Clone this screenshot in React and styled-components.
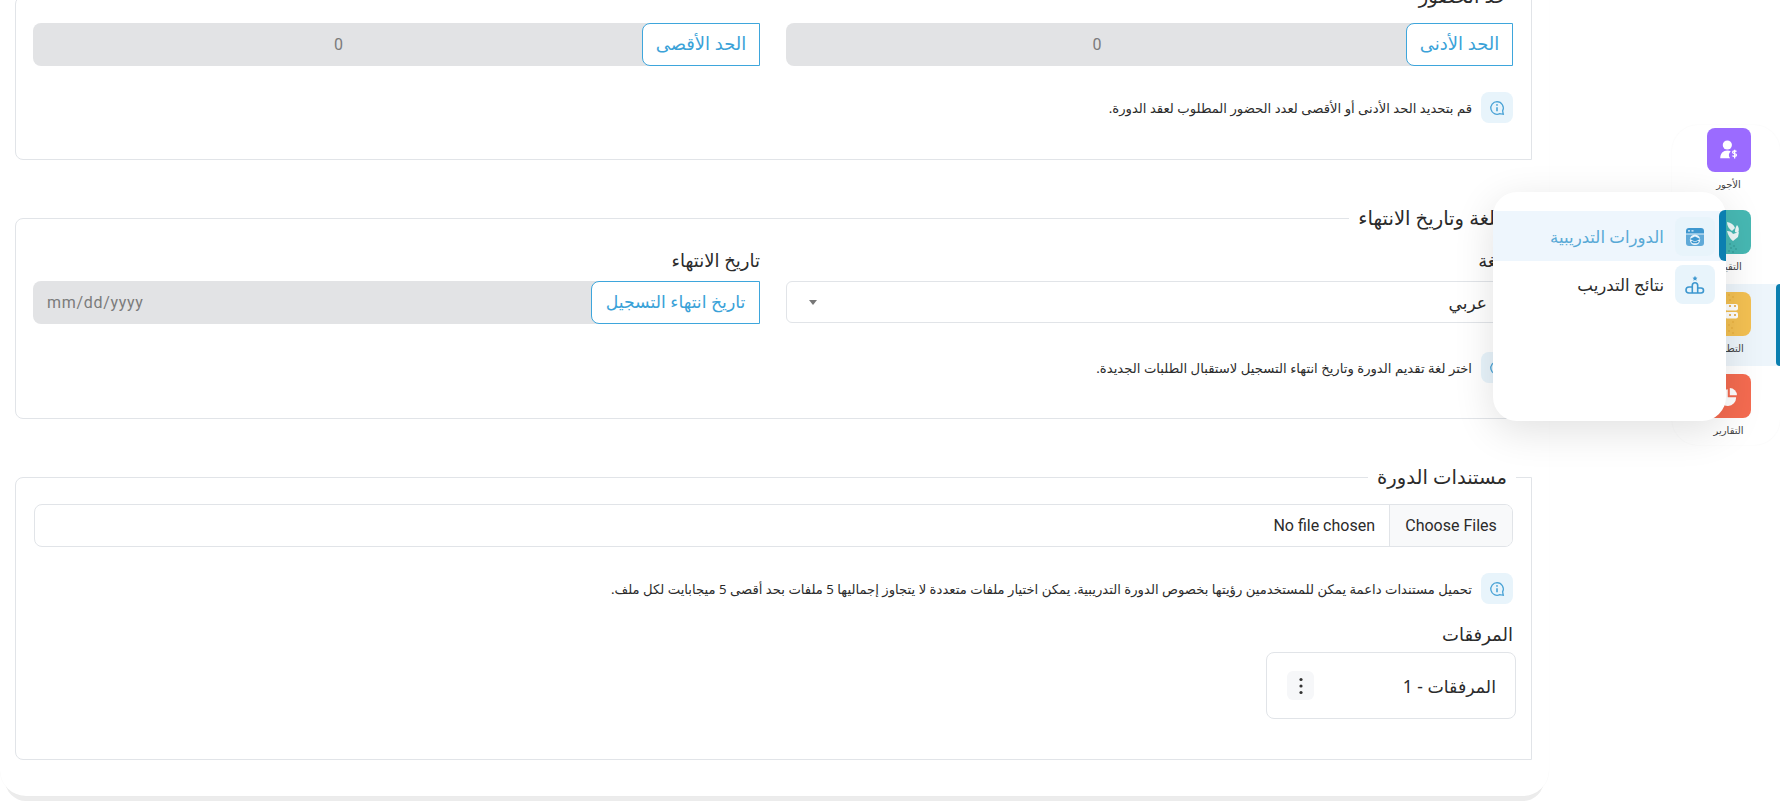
import React from "react"
import styled, { createGlobalStyle } from "styled-components"

const arabic = `"Noto Sans", "DejaVu Sans", sans-serif`
const latin = `Roboto, "DejaVu Sans", sans-serif`
const borderColor = "#e1e4e8"

const GlobalStyle = createGlobalStyle`
  html, body {
    margin: 0;
    padding: 0;
    background: #fff;
    overflow: hidden;
  }
  * {
    box-sizing: border-box;
  }
`

const Page = styled.div`
  direction: ltr;
  display: flex;
  align-items: flex-start;
  width: 1780px;
  height: 801px;
  overflow: hidden;
  font-family: ${arabic};
  color: #2b2b2b;
`

const Card = styled.main`
  direction: rtl;
  flex: none;
  width: 1549px;
  height: 834px;
  margin-top: -38px;
  padding: 20px 17px 0 15px;
  background: #fff;
  border-radius: 26px;
  box-shadow: 0 0 1px rgba(0, 0, 0, 0.05), 0 10px 0 -5px #ececec;
`

const Section = styled.fieldset`
  margin: 0 0 44px;
  padding: ${p => p.$top}px 18px ${p => p.$bottom}px 17px;
  min-width: 0;
  border: 1px solid ${borderColor};
  border-radius: 8px 0 0 8px;
`

const Legend = styled.legend`
  margin-right: -3px;
  padding: 0 9px;
  font-size: 19.6px;
  line-height: 28px;
  white-space: nowrap;
`

const Columns = styled.div`
  display: grid;
  grid-template-columns: 727px 727px;
  column-gap: 26px;
`

const FieldLabel = styled.div`
  height: 24px;
  margin-bottom: 9px;
  font-size: 18px;
  line-height: 24px;
  white-space: nowrap;
`

const InputGroup = styled.div`
  display: flex;
  height: 43px;
`

const Addon = styled.div`
  position: relative;
  z-index: 1;
  flex: none;
  width: ${p => p.$width}px;
  border: 1px solid #3ea6dc;
  border-top-left-radius: 8px;
  border-bottom-left-radius: 8px;
  background: #fff;
  color: #3aa2d8;
  font-size: ${p => p.$size}px;
  line-height: 39px;
  text-align: center;
  white-space: nowrap;
`

const ReadOnly = styled.div`
  flex: 1;
  margin-right: -8px;
  padding: ${p => (p.$date ? "0 14px" : "0 20px 0 14px")};
  border-radius: 8px 0 0 8px;
  background: #e2e3e5;
  color: #7b7b7b;
  font-family: ${latin};
  font-size: 16px;
  letter-spacing: ${p => (p.$date ? "0.7px" : "0")};
  line-height: 43px;
  text-align: ${p => (p.$date ? "left" : "center")};
`

const SelectBox = styled.div`
  display: flex;
  align-items: center;
  justify-content: space-between;
  height: 42px;
  margin-top: 1px;
  padding: 0 25px 0 22px;
  border: 1px solid ${borderColor};
  border-radius: 6px;
  font-size: 17px;
`

const Caret = styled.span`
  width: 0;
  height: 0;
  border-left: 4px solid transparent;
  border-right: 4px solid transparent;
  border-top: 5px solid #777;
`

const Hint = styled.div`
  display: flex;
  align-items: center;
  gap: 9px;
  margin-top: ${p => p.$gap}px;
  font-size: 13.2px;
  white-space: nowrap;
`

const HintIcon = styled.span`
  flex: none;
  display: flex;
  align-items: center;
  justify-content: center;
  width: 32px;
  height: 31px;
  border-radius: 8px;
  background: #e8f4fb;
  color: #4aa3d6;
`

const FileRow = styled.div`
  display: flex;
  height: 43px;
  margin-left: 1px;
  border: 1px solid ${borderColor};
  border-radius: 8px;
  overflow: hidden;
  font-family: ${latin};
  font-size: 16px;
  line-height: 41px;
`

const FileButton = styled.div`
  flex: none;
  width: 123px;
  border-left: 1px solid ${borderColor};
  background: #f8f9fa;
  text-align: center;
`

const FileName = styled.div`
  padding-right: 14px;
`

const AttachLabel = styled.div`
  margin-top: 18px;
  font-size: 18px;
  line-height: 24px;
`

const AttachCard = styled.div`
  display: flex;
  align-items: center;
  justify-content: space-between;
  width: 250px;
  height: 67px;
  margin: 6px -3px 0 0;
  padding: 0 19px 0 20px;
  border: 1px solid ${borderColor};
  border-radius: 8px;
  font-size: 17.4px;
`

const DotsButton = styled.span`
  display: flex;
  align-items: center;
  justify-content: center;
  width: 27px;
  height: 29px;
  border-radius: 6px;
  background: #f6f7f9;
`

const Aside = styled.aside`
  position: relative;
  direction: rtl;
  flex: none;
  width: 108px;
  height: 320px;
  margin: 125px 0 0 auto;
  border-radius: 26px;
  background: #fff;
  box-shadow: 0 0 2px rgba(0, 0, 0, 0.04);
`

const SideList = styled.div`
  margin-top: -5px;
`

const SideItem = styled.div`
  position: relative;
  display: flex;
  flex-direction: column;
  align-items: center;
  height: 82px;
  padding: 8px 0 0 5px;
  background: ${p => (p.$active ? "#edf5fb" : "transparent")};
  &::after {
    content: "";
    display: ${p => (p.$active ? "block" : "none")};
    position: absolute;
    top: 0;
    right: 0;
    bottom: 0;
    width: 4px;
    border-radius: 6px 0 0 6px;
    background: #0b7fb0;
  }
`

const SideIcon = styled.span`
  display: flex;
  align-items: center;
  justify-content: center;
  width: 44px;
  height: 44px;
  border-radius: 8px;
  background: ${p => p.$color};
  color: #fff;
`

const SideLabel = styled.span`
  margin-top: 4px;
  color: #444;
  font-size: 10px;
  line-height: 16px;
`

const Popup = styled.div`
  position: absolute;
  z-index: 5;
  top: 67px;
  left: -179px;
  width: 233px;
  height: 229px;
  padding-top: 19px;
  border-radius: 24px;
  background: #fff;
  box-shadow: 0 10px 40px rgba(0, 0, 0, 0.12);
`

const PopupItem = styled.div`
  position: relative;
  display: flex;
  align-items: center;
  gap: 11px;
  padding: ${p => (p.$active ? "6px 11px 5px" : "4px 11px")};
  background: ${p => (p.$active ? "#eef6fd" : "transparent")};
  color: ${p => (p.$active ? "#58a9d6" : "#2b2b2b")};
  font-size: 16.6px;
  &::after {
    content: "";
    display: ${p => (p.$active ? "block" : "none")};
    position: absolute;
    top: -1px;
    right: 0;
    bottom: 0;
    width: 7px;
    border-radius: 6px 0 0 6px;
    background: #0b7fb0;
  }
`

const PopupIcon = styled.span`
  flex: none;
  display: flex;
  align-items: center;
  justify-content: center;
  width: 40px;
  height: 39px;
  border-radius: 8px;
  background: #e8f4fb;
  color: #3d97cf;
`

function InfoIcon() {
  return (
    <svg width="16" height="16" viewBox="0 0 16 16" fill="none" stroke="currentColor" strokeWidth="1.3">
      <path d="M8 1.7a6.3 6.3 0 1 0 2.8 12l3.5.6-.7-3.4A6.3 6.3 0 0 0 8 1.7Z" />
      <path d="M8 7.2v4" strokeWidth="1.6" />
      <circle cx="8" cy="4.9" r=".9" fill="currentColor" stroke="none" />
    </svg>
  )
}

function WageIcon() {
  return (
    <svg width="20" height="20" viewBox="0 0 24 24" fill="#fff">
      <circle cx="10" cy="6" r="5.500" />
      <path d="M1.500 22c0-6 3.500-9.500 8.500-9.500 1.700 0 3 .3 4.100 1a6.500 6.500 0 0 0-.8 8.500H1.500Z" />
      <path d="M21 13.800c-.8-1-4.700-1.300-4.700.9 0 2.200 4.700 1 4.700 3.300 0 2.200-4 1.900-4.900.8M18.800 11.800v10.400" fill="none" stroke="#fff" strokeWidth="1.500" />
    </svg>
  )
}

function AssessIcon() {
  return (
    <svg width="44" height="44" viewBox="0 0 44 44" fill="#fff">
      <path d="M20 12c4 .5 7 2.500 8 6l-3 3c-3-2-5-5-5-9Z" opacity=".9" />
      <path d="M30 15c2 2 2.500 5 1 8l-3-1c0-2 .5-5 2-7Z" opacity=".9" />
      <path d="M20 21c3 0 5 1 6 3l6-2-1 5-5 4c-3-2-5-6-6-10Z" opacity=".9" />
      <g fill="#2d8f8a">
        <circle cx="23" cy="34" r=".7" /><circle cx="27" cy="36" r=".7" /><circle cx="24" cy="38" r=".7" />
        <circle cx="29" cy="39" r=".7" /><circle cx="22" cy="41" r=".7" /><circle cx="26" cy="42" r=".7" />
      </g>
    </svg>
  )
}

function OrgIcon() {
  return (
    <svg width="44" height="44" viewBox="0 0 44 44">
      <g fill="#fff">
        <rect x="18" y="12" width="13" height="6.500" rx="2" />
        <rect x="18" y="20" width="13" height="6.500" rx="2" />
      </g>
      <g fill="#e0a032">
        <circle cx="23" cy="14" r="1" /><circle cx="28" cy="14" r="1" /><circle cx="23" cy="23" r="1" /><circle cx="28" cy="23" r="1" />
        <circle cx="22" cy="3" r=".7" /><circle cx="26" cy="5" r=".7" /><circle cx="23" cy="8" r=".7" />
        <circle cx="26" cy="30" r=".7" /><circle cx="22" cy="33" r=".7" /><circle cx="25" cy="36" r=".7" />
        <circle cx="22" cy="39" r=".7" /><circle cx="26" cy="41" r=".7" />
      </g>
    </svg>
  )
}

function ReportsIcon() {
  return (
    <svg width="20" height="20" viewBox="0 0 24 24" fill="#fff">
      <path d="M10.500 4a10 10 0 1 0 10 9.500H10.500V4Z" />
      <path d="M13 2.500v8.500h8.500A8.500 8.500 0 0 0 13 2.500Z" />
    </svg>
  )
}

function CoursesIcon() {
  return (
    <svg width="20" height="20" viewBox="0 0 20 20">
      <path d="M1 4a3 3 0 0 1 3-3h12a3 3 0 0 1 3 3v2.500H1V4Z" fill="currentColor" />
      <path d="M3 3.800h2M6.500 3.800h2" stroke="#e8f4fb" strokeWidth="1.200" />
      <path d="M1 7.500h18V16a3 3 0 0 1-3 3H4a3 3 0 0 1-3-3V7.500Z" fill="currentColor" opacity=".8" />
      <circle cx="10" cy="12.800" r="5.200" fill="#e8f4fb" />
      <path d="M10 9.500l5.200 2.500L10 14.500 4.800 12 10 9.500Z" fill="currentColor" />
      <path d="M6.800 14c.5 2.200 6 2.200 6.400 0" fill="none" stroke="currentColor" strokeWidth="1.400" />
    </svg>
  )
}

function ResultsIcon() {
  return (
    <svg width="20" height="20" viewBox="0 0 20 20" fill="none" stroke="currentColor" strokeWidth="1.600">
      <path d="M10 .8l.8 1.700 1.700.2-1.300 1.200.4 1.800-1.600-.9-1.600.9.400-1.800-1.300-1.200 1.700-.2Z" fill="currentColor" stroke="none" />
      <path d="M7.300 18V10.500a2.700 2.700 0 0 1 5.400 0V18" />
      <path d="M7.300 18H4a3 3 0 0 1 0-6h3.300M12.700 13H16a2.500 2.500 0 0 1 0 5h-3.300M7.300 18h5.400" />
    </svg>
  )
}

function DotsIcon() {
  return (
    <svg width="4" height="18" viewBox="0 0 4 18" fill="#333">
      <circle cx="2" cy="2.500" r="1.600" />
      <circle cx="2" cy="9" r="1.600" />
      <circle cx="2" cy="15.500" r="1.600" />
    </svg>
  )
}

const sideItems = [
  { label: "الأجور", color: "#9b6bff", icon: <WageIcon /> },
  { label: "التقييم", color: "#47b8b3", icon: <AssessIcon /> },
  { label: "التطوير", color: "#f3c052", icon: <OrgIcon />, active: true },
  { label: "التقارير", color: "#f46b50", icon: <ReportsIcon /> }
]

export default function App() {
  return (
    <Page>
      <GlobalStyle />
      <Card>
        <Section $top={13} $bottom={36}>
          <Legend>حد الحضور</Legend>
          <Columns>
            <InputGroup>
              <Addon $width={107} $size={18}>الحد الأدنى</Addon>
              <ReadOnly>0</ReadOnly>
            </InputGroup>
            <InputGroup>
              <Addon $width={118} $size={18}>الحد الأقصى</Addon>
              <ReadOnly>0</ReadOnly>
            </InputGroup>
          </Columns>
          <Hint $gap={26}>
            <HintIcon><InfoIcon /></HintIcon>
            قم بتحديد الحد الأدنى أو الأقصى لعدد الحضور المطلوب لعقد الدورة.
          </Hint>
        </Section>

        <Section $top={16} $bottom={35}>
          <Legend>اللغة وتاريخ الانتهاء</Legend>
          <Columns>
            <div>
              <FieldLabel>اللغة</FieldLabel>
              <SelectBox>
                <span>عربي</span>
                <Caret />
              </SelectBox>
            </div>
            <div>
              <FieldLabel>تاريخ الانتهاء</FieldLabel>
              <InputGroup>
                <Addon $width={169} $size={17.3}>تاريخ انتهاء التسجيل</Addon>
                <ReadOnly $date>mm/dd/yyyy</ReadOnly>
              </InputGroup>
            </div>
          </Columns>
          <Hint $gap={28}>
            <HintIcon><InfoIcon /></HintIcon>
            اختر لغة تقديم الدورة وتاريخ انتهاء التسجيل لاستقبال الطلبات الجديدة.
          </Hint>
        </Section>

        <Section $top={13} $bottom={40}>
          <Legend>مستندات الدورة</Legend>
          <FileRow>
            <FileButton>Choose Files</FileButton>
            <FileName>No file chosen</FileName>
          </FileRow>
          <Hint $gap={26}>
            <HintIcon><InfoIcon /></HintIcon>
            تحميل مستندات داعمة يمكن للمستخدمين رؤيتها بخصوص الدورة التدريبية. يمكن اختيار ملفات متعددة لا يتجاوز إجماليها 5 ملفات بحد أقصى 5 ميجابايت لكل ملف.
          </Hint>
          <AttachLabel>المرفقات</AttachLabel>
          <AttachCard>
            <span>المرفقات - 1</span>
            <DotsButton><DotsIcon /></DotsButton>
          </AttachCard>
        </Section>
      </Card>

      <Aside>
        <SideList>
          {sideItems.map(item => (
            <SideItem key={item.label} $active={item.active}>
              <SideIcon $color={item.color}>{item.icon}</SideIcon>
              <SideLabel>{item.label}</SideLabel>
            </SideItem>
          ))}
        </SideList>
        <Popup>
          <PopupItem $active>
            <PopupIcon><CoursesIcon /></PopupIcon>
            الدورات التدريبية
          </PopupItem>
          <PopupItem>
            <PopupIcon><ResultsIcon /></PopupIcon>
            نتائج التدريب
          </PopupItem>
        </Popup>
      </Aside>
    </Page>
  )
}
